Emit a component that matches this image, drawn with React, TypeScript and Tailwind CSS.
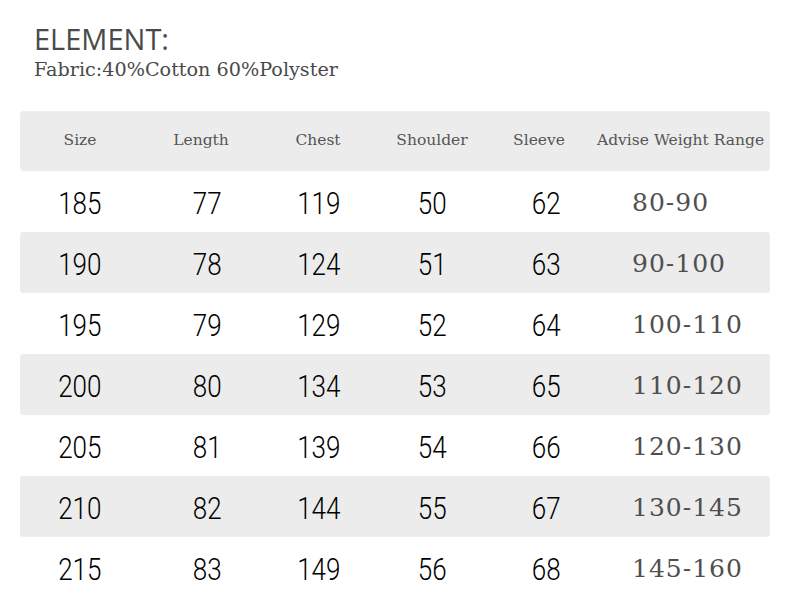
const headers = ["Size", "Length", "Chest", "Shoulder", "Sleeve", "Advise Weight Range"];

const rows = [
  ["185", "77", "119", "50", "62", "80-90"],
  ["190", "78", "124", "51", "63", "90-100"],
  ["195", "79", "129", "52", "64", "100-110"],
  ["200", "80", "134", "53", "65", "110-120"],
  ["205", "81", "139", "54", "66", "120-130"],
  ["210", "82", "144", "55", "67", "130-145"],
  ["215", "83", "149", "56", "68", "145-160"],
];

const cols = "grid grid-cols-[120px_122px_112px_116px_112px_168px]";

// small nudges so the numbers sit where they do in the picture
const nudge = ["", "pl-[12px]", "pl-[2px]", "", ""];

export default function App() {
  return (
    <div className="w-[790px] h-[605px] bg-white overflow-hidden">
      <div className="pl-[34px] pt-[22px]">
        <div className="font-['Open_Sans',sans-serif] text-[29px] leading-[34px] text-[#4a4a4a]">
          ELEMENT:
        </div>
        <div className="font-['DejaVu_Serif',serif] text-[19.2px] leading-[28px] text-[#4a4a4a]">
          Fabric:40%Cotton 60%Polyster
        </div>
      </div>

      <div className="mx-[20px] mt-[27px] w-[750px]">
        {/* header band */}
        <div className={`${cols} h-[60px] items-center rounded-[4px] bg-[#ececec] font-['DejaVu_Serif',serif] text-[15.5px] text-[#555]`}>
          {headers.map((h, i) => (
            <div
              key={h}
              className={`whitespace-nowrap ${i === 5 ? "-ml-[5px] text-left" : "text-center"} ${i === 4 ? "pr-[14px]" : ""}`}
            >
              {h}
            </div>
          ))}
        </div>

        {rows.map((r, ri) => (
          <div
            key={r[0]}
            className={`${cols} h-[61px] items-center rounded-[3px] ${ri % 2 === 1 ? "bg-[#ececec]" : "bg-white"}`}
          >
            {r.slice(0, 5).map((v, i) => (
              <div key={i} className={`flex justify-center pt-[3px] ${nudge[i]}`}>
                <span className="inline-block scale-x-[0.84] font-['Roboto',sans-serif] font-light text-[31px] leading-none text-[#000]">
                  {v}
                </span>
              </div>
            ))}
            <div className="pl-[30px] pt-[3px] font-['DejaVu_Serif',serif] text-[25px] tracking-[1px] text-[#4f4f4f]">
              {r[5]}
            </div>
          </div>
        ))}
      </div>
    </div>
  );
}
